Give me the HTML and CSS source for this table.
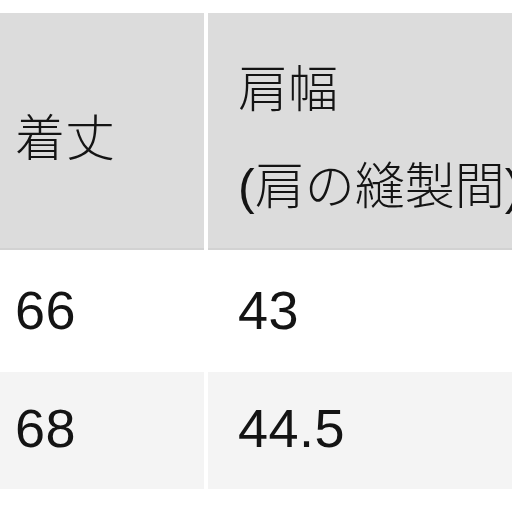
FILE: index.html
```html
<!DOCTYPE html>
<html lang="ja">
<head>
<meta charset="utf-8">
<link rel="stylesheet" href="styles.css">
</head>
<body>
<div class="table">
  <div class="cell head first"><span class="txt">着丈</span></div>
  <div class="cell head second"><span class="txt">肩幅<br>(肩の縫製間)</span></div>
  <div class="cell row1 first"><span class="txt num">66</span></div>
  <div class="cell row1 second"><span class="txt num">43</span></div>
  <div class="cell row2 first"><span class="txt num">68</span></div>
  <div class="cell row2 second"><span class="txt num">44.5</span></div>
</div>
</body>
</html>
```
FILE: styles.css
```css
html, body {
  margin: 0;
  padding: 0;
  background: #ffffff;
  overflow: hidden;
  width: 512px;
  height: 512px;
}
body {
  font-family: "Liberation Sans", "Noto Sans CJK JP", sans-serif;
  font-weight: 300;
  color: #141414;
  font-size: 50px;
}
.table {
  margin-top: 13px;
  display: grid;
  grid-template-columns: 204px 1fr;
  grid-template-rows: 237px 122px 117px;
  column-gap: 4px;
}
.cell {
  display: flex;
  align-items: center;
  white-space: nowrap;
  min-width: 0;
}
.txt {
  line-height: 97px;
}
.num {
  font-size: 54px;
  letter-spacing: 0.5px;
}
.first {
  padding-left: 15px;
}
.second {
  padding-left: 30px;
}
.head {
  background: #dcdcdc;
  padding-top: 17px;
  border-bottom: 2px solid #d2d2d2;
}
.row1 {
  background: #ffffff;
  padding-bottom: 2px;
}
.row2 {
  background: #f4f4f4;
  padding-bottom: 4px;
}
```
